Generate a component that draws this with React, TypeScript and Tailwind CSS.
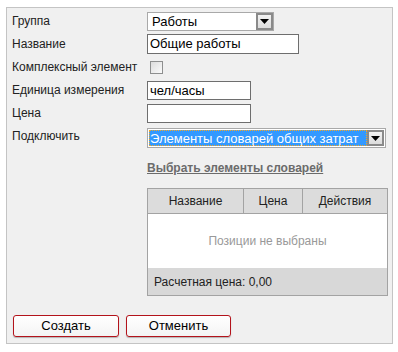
import React from "react";

function Arrow() {
  return (
    <div className="flex h-full w-[17px] items-center justify-center border-2 border-[#8a8a8a] bg-gradient-to-b from-[#f2f2f2] to-[#dcdcdc]">
      <svg width="9" height="5" viewBox="0 0 9 5">
        <path d="M0 0H9L4.5 5Z" fill="#000" />
      </svg>
    </div>
  );
}

function Row({ label, children, className = "" }: { label: string; children: React.ReactNode; className?: string }) {
  return (
    <div className={`flex items-center ${className}`}>
      <div className="w-[135px] shrink-0 text-[12px] leading-[13px] text-[#222]">{label}</div>
      {children}
    </div>
  );
}

export default function App() {
  return (
    <div className="min-h-screen bg-white pl-[6px] pt-[7px] font-['Liberation_Sans',Arial,sans-serif]">
      <div className="flex h-[337px] w-[387px] flex-col border border-[#c4c4c4] bg-[#f0f0f0] pl-[5px] pt-[4px]">
        <Row label="Группа" className="h-[19px]">
          <div className="flex h-[19px] w-[127px] items-center border border-[#a9a9a9] bg-white">
            <span className="flex-1 pl-[4px] text-[13px] leading-none text-black">Работы</span>
            <Arrow />
          </div>
        </Row>

        <Row label="Название" className="mt-[3px] h-[20px]">
          <div className="flex h-[20px] w-[152px] items-center border border-[#6e6e6e] bg-white pl-[2px] text-[13px] text-black">
            Общие работы
          </div>
        </Row>

        <Row label="Комплексный элемент" className="mt-[7px] h-[13px]">
          <div className="ml-[3px] h-[13px] w-[13px] border border-[#8e8f8f] bg-gradient-to-br from-[#dcdcdc] to-[#fbfbfb]" />
        </Row>

        <Row label="Единица измерения" className="mt-[7px] h-[19px]">
          <div className="flex h-[19px] w-[104px] items-center border border-[#6e6e6e] bg-white pl-[2px] text-[13px] text-black">
            чел/часы
          </div>
        </Row>

        <Row label="Цена" className="mt-[4px] h-[19px]">
          <div className="h-[19px] w-[104px] border border-[#6e6e6e] bg-white" />
        </Row>

        <div className="mt-[5px] flex h-[20px] items-start">
          <div className="w-[135px] shrink-0 text-[12px] leading-[16px] text-[#222]">Подключить</div>
          <div className="flex h-[20px] w-[239px] items-center border border-[#a9a9a9] bg-white p-[1px]">
            <span className="flex h-full flex-1 items-center whitespace-nowrap bg-[#3399ff] pl-[1px] text-[13px] leading-none text-white outline outline-1 outline-dotted outline-[#f5a623] -outline-offset-1">
              Элементы словарей общих затрат
            </span>
            <Arrow />
          </div>
        </div>

        <div className="ml-[135px] mt-[11px] h-[16px] leading-[16px]">
          <span className="text-[12px] font-bold text-[#6b6b6b] underline underline-offset-1">
            Выбрать элементы словарей
          </span>
        </div>

        <div className="ml-[135px] mt-[13px] w-[241px] border border-[#a3a3a3] text-[12px]">
          <div className="grid h-[25px] grid-cols-[96px_59px_1fr] border-b border-[#a3a3a3] bg-[#dcdcdc] text-[#222]">
            <div className="flex items-center justify-center border-r border-[#a3a3a3]">Название</div>
            <div className="flex items-center justify-center border-r border-[#a3a3a3]">Цена</div>
            <div className="flex items-center justify-center">Действия</div>
          </div>
          <div className="flex h-[54px] items-center justify-center bg-white text-[#999]">Позиции не выбраны</div>
          <div className="flex h-[27px] items-center bg-[#d8d8d8] pl-[6px] text-[#222]">Расчетная цена: 0,00</div>
        </div>

        <div className="mt-[19px] flex gap-[7px] pl-[1px]">
          <button className="h-[22px] w-[106px] rounded-[3px] border border-[#b3131b] bg-gradient-to-b from-white to-[#f4f4f4] text-[13px] text-black shadow-[0_1px_1px_rgba(0,0,0,0.25)]">
            Создать
          </button>
          <button className="h-[22px] w-[105px] rounded-[3px] border border-[#b3131b] bg-gradient-to-b from-white to-[#f4f4f4] text-[13px] text-black shadow-[0_1px_1px_rgba(0,0,0,0.25)]">
            Отменить
          </button>
        </div>
      </div>
    </div>
  );
}
